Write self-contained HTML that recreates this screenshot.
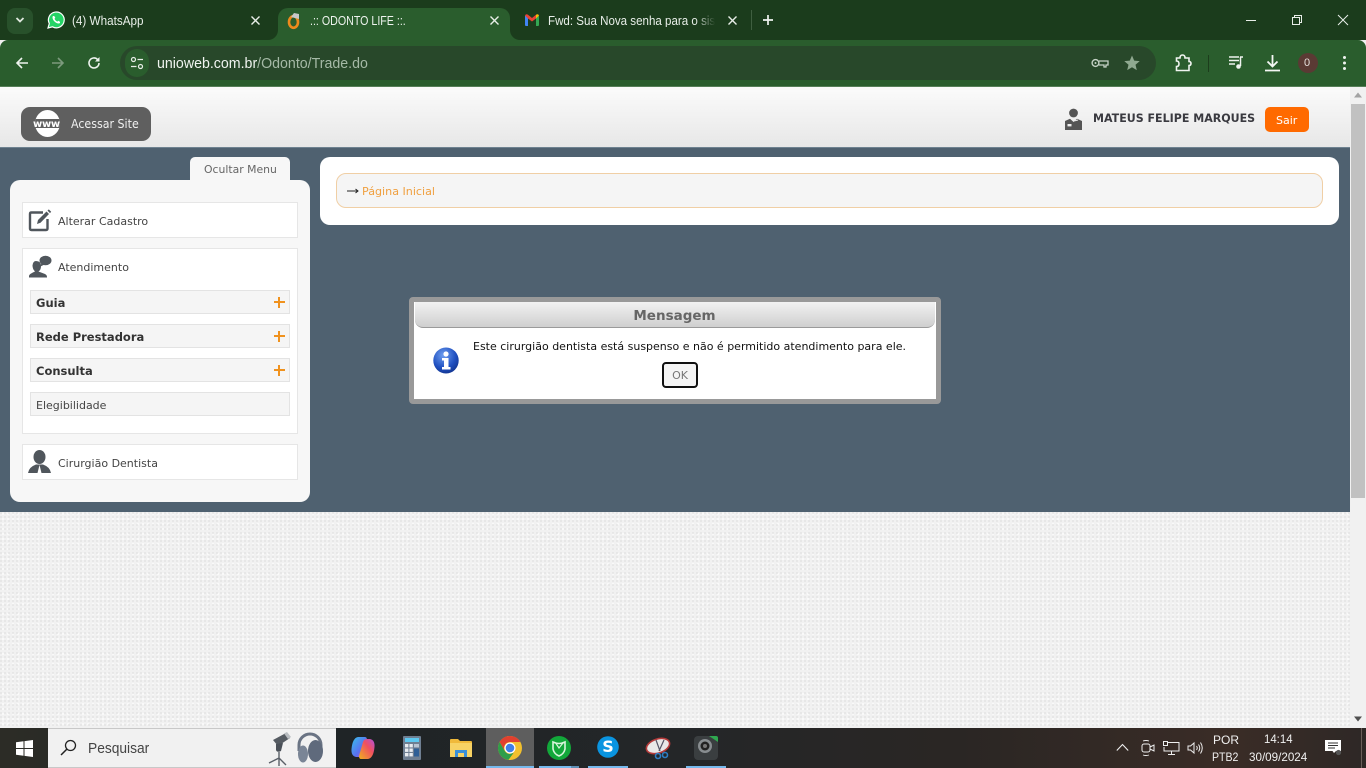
<!DOCTYPE html>
<html lang="pt-BR">
<head>
<meta charset="utf-8">
<title>.:: ODONTO LIFE ::.</title>
<style>
*{box-sizing:border-box}
html,body{margin:0;padding:0;width:1366px;height:768px;overflow:hidden}
body{position:relative;font-family:"DejaVu Sans",Verdana,sans-serif;background:#f0f0f0}
.a{position:absolute}
.t{position:absolute;white-space:nowrap;line-height:1;transform-origin:left center}
.ui{font-family:"Liberation Sans",Arial,sans-serif}
svg{position:absolute;overflow:visible}
.box{position:absolute;background:#fff;border:1px solid #e6e6e6}
.sub{position:absolute;left:30px;width:260px;height:24px;background:#f5f5f5;border:1px solid #e3e3e3}
.sub b,.sub span{position:absolute;left:5px;top:6px;font-size:11.5px;line-height:13px;color:#333;white-space:nowrap}
.sub span{font-size:11px;color:#444}
.plus{position:absolute;left:242.5px;top:10px;width:11px;height:2px;background:#f0921e}
.plus:after{content:"";position:absolute;left:4.5px;top:-4.5px;width:2px;height:11px;background:#f0921e}
.lbl{position:absolute;left:58px;font-size:11px;line-height:13px;color:#444;white-space:nowrap}
</style>
</head>
<body>

<!-- page background pattern -->
<div class="a" style="left:0;top:512px;width:1350px;height:216px;background-color:#f1f1f1;background-image:radial-gradient(circle at 1px 1px,#e4e4e4 0.8px,transparent 1px),radial-gradient(circle at 3px 2px,#fbfbfb 0.9px,transparent 1.1px);background-size:4px 4px,5px 5px"></div>

<!-- Chrome title bar -->
<div class="a" style="left:0;top:0;width:1366px;height:40px;background:#1b3c1c"></div>
<div class="a" style="left:7px;top:8px;width:26px;height:26px;border-radius:8px;background:#28512b"></div>
<svg style="left:15px;top:16px" width="10" height="8" viewBox="0 0 10 8"><path d="M1.5 2 L5 5.5 L8.5 2" fill="none" stroke="#dfe8df" stroke-width="1.8"/></svg>

<!-- WhatsApp tab -->
<svg style="left:47px;top:11px" width="18" height="18" viewBox="0 0 18 18"><path d="M1 17 L2.3 12.5 A7.9 7.9 0 1 1 5.5 15.8 Z" fill="#25d366" stroke="#fff" stroke-width="1.2"/><path d="M6 5 C5 6 5.5 8.5 7.5 10.5 C9.5 12.5 12 13 13 12 L13 10.8 L11.2 9.8 L10.4 10.6 C9 10 8 9 7.5 7.7 L8.3 6.8 L7.2 5 Z" fill="#fff"/></svg>
<div class="t ui" style="left:72px;top:14px;font-size:13px;color:#e8eee8;transform:scaleX(.9)">(4) WhatsApp</div>
<svg style="left:251px;top:16px" width="9" height="9" viewBox="0 0 9 9"><path d="M.5 .5 L8.5 8.5 M8.5 .5 L.5 8.5" stroke="#e8eee8" stroke-width="1.4"/></svg>

<!-- Active tab -->
<div class="a" style="left:278px;top:8px;width:232px;height:34px;background:#2a5d2d;border-radius:10px 10px 0 0"></div>
<svg style="left:268px;top:30px" width="10" height="10" viewBox="0 0 10 10"><path d="M10 0 V10 H0 A10 10 0 0 0 10 0Z" fill="#2a5d2d"/></svg>
<svg style="left:510px;top:30px" width="10" height="10" viewBox="0 0 10 10"><path d="M0 0 V10 H10 A10 10 0 0 1 0 0Z" fill="#2a5d2d"/></svg>
<svg style="left:286px;top:12px" width="16" height="17" viewBox="0 0 16 17"><ellipse cx="7.5" cy="10" rx="4.5" ry="5.8" fill="none" stroke="#ee8a1c" stroke-width="2.6"/><path d="M5 5 L8 1 L13 2 L13 7 Z" fill="#c8c8c8"/></svg>
<div class="t ui" style="left:310px;top:14px;font-size:13px;color:#eef3ee;transform:scaleX(.82)">.:: ODONTO LIFE ::.</div>
<svg style="left:490px;top:16px" width="9" height="9" viewBox="0 0 9 9"><path d="M.5 .5 L8.5 8.5 M8.5 .5 L.5 8.5" stroke="#e8eee8" stroke-width="1.4"/></svg>

<!-- Gmail tab -->
<svg style="left:525px;top:14px" width="14" height="12" viewBox="0 0 14 12"><path d="M0 1.5 L3 3.5 V12 H1 Q0 12 0 11Z" fill="#4285f4"/><path d="M14 1.5 L11 3.5 V12 H13 Q14 12 14 11Z" fill="#34a853"/><path d="M0 1.5 Q1 -.5 3 .8 L7 4 L11 .8 L11 4.5 L7 7.5 L3 4.5Z" fill="#ea4335"/><path d="M11 .8 Q13 -.5 14 1.5 L11 4.5Z" fill="#fbbc04"/></svg>
<div class="t ui" style="left:548px;top:14px;font-size:13px;color:#e8eee8;transform:scaleX(.89);width:188px;overflow:hidden;-webkit-mask-image:linear-gradient(90deg,#000 88%,transparent);mask-image:linear-gradient(90deg,#000 88%,transparent)">Fwd: Sua Nova senha para o sistema</div>
<svg style="left:728px;top:16px" width="9" height="9" viewBox="0 0 9 9"><path d="M.5 .5 L8.5 8.5 M8.5 .5 L.5 8.5" stroke="#e8eee8" stroke-width="1.4"/></svg>
<div class="a" style="left:751px;top:10px;width:1px;height:20px;background:#3f5f40"></div>
<svg style="left:762px;top:14px" width="12" height="12" viewBox="0 0 12 12"><path d="M6 1 V11 M1 6 H11" stroke="#f0f4f0" stroke-width="1.7"/></svg>

<!-- Window controls -->
<svg style="left:1246px;top:15px" width="10" height="10" viewBox="0 0 10 10"><path d="M0 5.5 H10" stroke="#e8eee8" stroke-width="1"/></svg>
<svg style="left:1292px;top:15px" width="10" height="10" viewBox="0 0 10 10"><path d="M.5 2.5 H7.5 V9.5 H.5Z M2.5 2.5 V.5 H9.5 V7.5 H7.5" fill="none" stroke="#e8eee8" stroke-width="1"/></svg>
<svg style="left:1338px;top:15px" width="10" height="10" viewBox="0 0 10 10"><path d="M0 0 L10 10 M10 0 L0 10" stroke="#e8eee8" stroke-width="1"/></svg>

<!-- Toolbar -->
<div class="a" style="left:0;top:40px;width:1366px;height:47px;background:#2a5d2d;border-radius:8px 8px 0 0;border-bottom:1px solid #567f58"></div>
<svg style="left:15px;top:56px" width="14" height="14" viewBox="0 0 14 14"><path d="M13 7 H2 M7 2 L2 7 L7 12" fill="none" stroke="#eef3ee" stroke-width="1.6"/></svg>
<svg style="left:51px;top:56px" width="14" height="14" viewBox="0 0 14 14"><path d="M1 7 H12 M7 2 L12 7 L7 12" fill="none" stroke="#7c9a7d" stroke-width="1.6"/></svg>
<svg style="left:87px;top:56px" width="14" height="14" viewBox="0 0 14 14"><path d="M12 7 A5 5 0 1 1 10.5 3.4" fill="none" stroke="#eef3ee" stroke-width="1.6"/><path d="M12.5 1 V5.5 H8 Z" fill="#eef3ee"/></svg>

<div class="a" style="left:120px;top:46px;width:1036px;height:34px;border-radius:17px;background:#28482a"></div>
<div class="a" style="left:125px;top:49px;width:24px;height:28px;border-radius:14px;background:#2a5d2d"></div>
<svg style="left:130px;top:56px" width="14" height="14" viewBox="0 0 14 14"><circle cx="3.5" cy="3.5" r="2" fill="none" stroke="#e8eee8" stroke-width="1.2"/><path d="M7.5 3.5 H13 M1 10.5 H6.5" stroke="#e8eee8" stroke-width="1.3"/><circle cx="10.5" cy="10.5" r="2" fill="none" stroke="#e8eee8" stroke-width="1.2"/></svg>
<div class="t ui" style="left:157px;top:56px;font-size:15px;color:#f0f4f0;transform:scaleX(.946)">unioweb.com.br<span style="color:#a5b9a6">/Odonto/Trade.do</span></div>
<svg style="left:1091px;top:57px" width="18" height="12" viewBox="0 0 18 12"><circle cx="4.5" cy="6" r="3.4" fill="none" stroke="#c6d2c6" stroke-width="1.4"/><circle cx="4.5" cy="6" r="1" fill="#c6d2c6"/><path d="M8 4 H17 V8 H15 V10 H13 V8 H8" fill="none" stroke="#c6d2c6" stroke-width="1.3"/></svg>
<svg style="left:1124px;top:55px" width="16" height="16" viewBox="0 0 16 16"><path d="M8 .5 L10.2 5.6 L15.7 6.1 L11.5 9.7 L12.8 15.1 L8 12.3 L3.2 15.1 L4.5 9.7 L.3 6.1 L5.8 5.6Z" fill="#8fa990"/></svg>
<svg style="left:1175px;top:54px" width="17" height="18" viewBox="0 0 17 18"><path d="M1.5 4 H5 Q5 1 7.5 1 Q10 1 10 4 H14 V7.5 Q16 7.5 16 9.5 Q16 11.5 14 11.5 V16.5 H1.5 V12.5 Q4 12.5 4 9.7 Q4 7 1.5 7Z" fill="none" stroke="#f0f4f0" stroke-width="1.6"/></svg>
<div class="a" style="left:1208px;top:55px;width:1px;height:17px;background:#1c3d1c"></div>
<svg style="left:1228px;top:55px" width="16" height="15" viewBox="0 0 16 15"><path d="M1 2 H11 M1 5.5 H11 M1 9 H7" stroke="#f0f4f0" stroke-width="1.5"/><path d="M12 2 H15 M12.5 2 V11" stroke="#f0f4f0" stroke-width="1.5"/><circle cx="10.5" cy="11.5" r="2.3" fill="#f0f4f0"/></svg>
<svg style="left:1264px;top:54px" width="17" height="18" viewBox="0 0 17 18"><path d="M8.5 1 V12 M3.5 7.5 L8.5 12.5 L13.5 7.5 M1 16.5 H16" fill="none" stroke="#f4f7f4" stroke-width="1.8"/></svg>
<div class="a" style="left:1298px;top:53px;width:20px;height:20px;border-radius:10px;background:#5a3a34"></div>
<div class="t ui" style="left:1304px;top:58px;font-size:11px;color:#e6e0dd">0</div>
<div class="a" style="left:1343px;top:56px;width:3px;height:3px;border-radius:2px;background:#f0f4f0;box-shadow:0 5.5px 0 #f0f4f0,0 11px 0 #f0f4f0"></div>

<!-- Page header -->
<div class="a" style="left:0;top:87px;width:1350px;height:60px;background:linear-gradient(#fbfbfb,#e7e7e7)"></div>
<div class="a" style="left:21px;top:107px;width:130px;height:34px;border-radius:9px;background:#5f5f5f"></div>
<div class="a" style="left:35px;top:110px;width:25px;height:27px;border-radius:50%;background:#fff;overflow:hidden"><div class="a" style="left:0;top:9px;width:25px;height:9px;background:#5f5f5f"></div></div>
<div class="t" style="left:33px;top:119px;font:bold 10px 'DejaVu Sans',sans-serif;color:#fff;letter-spacing:-.3px">www</div>
<div class="t" style="left:71px;top:118px;font-size:12px;color:#f0f0f0;transform:scaleX(.92)">Acessar Site</div>

<svg style="left:1065px;top:108px" width="18" height="24" viewBox="0 0 18 24"><circle cx="8.5" cy="5" r="4.4" fill="#555"/><path d="M0 22 V13 L5 10.8 L8.5 14 L12 10.8 L17 13 V22Z" fill="#555"/><rect x="2.5" y="16" width="4" height="2.4" fill="#eee"/><path d="M9 13 L13 12" stroke="#eee" stroke-width="1.1"/></svg>
<div class="t" style="left:1093px;top:113px;font-size:11.5px;font-weight:bold;color:#3a3a40;transform:scaleX(.96)">MATEUS FELIPE MARQUES</div>
<div class="a" style="left:1265px;top:107px;width:44px;height:25px;border-radius:5px;background:#ff6a00"></div>
<div class="t" style="left:1276px;top:115px;font-size:11px;color:#fff">Sair</div>

<!-- Blue band -->
<div class="a" style="left:0;top:147px;width:1350px;height:365px;background:#4f6170;border-top:1px solid #6e8290"></div>

<!-- Sidebar -->
<div class="a" style="left:190px;top:157px;width:100px;height:24px;background:#f7f7f7;border-radius:5px 5px 0 0"></div>
<div class="t" style="left:204px;top:163.5px;font-size:11px;color:#666;transform:scaleX(.985)">Ocultar Menu</div>
<div class="a" style="left:10px;top:180px;width:300px;height:322px;background:#f7f7f7;border-radius:10px"></div>

<div class="box" style="left:22px;top:202px;width:276px;height:36px"></div>
<svg style="left:28px;top:209px" width="24" height="23" viewBox="0 0 24 23"><path d="M15 3.5 H3.5 Q2 3.5 2 5 V19.5 Q2 21 3.5 21 H18 Q19.5 21 19.5 19.5 V10" fill="none" stroke="#50565c" stroke-width="2.4"/><path d="M9 15 L10 11 L18.5 2.5 L21 5 L12.5 13.7Z" fill="#50565c"/><path d="M19.5 1.6 L20.8 .4 L23.2 2.8 L22 4.1Z" fill="#50565c"/></svg>
<div class="lbl" style="top:215px">Alterar Cadastro</div>

<div class="box" style="left:22px;top:248px;width:276px;height:186px"></div>
<svg style="left:28px;top:255px" width="24" height="23" viewBox="0 0 24 23"><path d="M8 6 Q13 6 13 11 Q13 15 10.5 16.5 L17 19 Q19 20 19 22 V22.5 H1 V21 Q1 19 7 16.5 Q4.5 14 4.5 10.5 Q5 6 8 6Z" fill="#50565c"/><ellipse cx="17.5" cy="5.5" rx="6" ry="4.8" fill="#50565c"/><path d="M13.5 8.5 L11.5 12 L16.5 9.5Z" fill="#50565c"/></svg>
<div class="lbl" style="top:261px">Atendimento</div>

<div class="sub" style="top:290px"><b>Guia</b><i class="plus"></i></div>
<div class="sub" style="top:324px"><b>Rede Prestadora</b><i class="plus"></i></div>
<div class="sub" style="top:358px"><b>Consulta</b><i class="plus"></i></div>
<div class="sub" style="top:392px"><span>Elegibilidade</span></div>

<div class="box" style="left:22px;top:444px;width:276px;height:36px"></div>
<svg style="left:28px;top:450px" width="24" height="24" viewBox="0 0 24 24"><ellipse cx="11.5" cy="7" rx="6" ry="7" fill="#50565c"/><path d="M0 23 Q1 17 8 14.5 L15 14.5 Q22 17 23 23 L13.5 23 L11.5 15 L9.5 23Z" fill="#50565c"/></svg>
<div class="lbl" style="top:457px">Cirurgião Dentista</div>

<!-- Main panel -->
<div class="a" style="left:320px;top:157px;width:1019px;height:68px;background:#fff;border-radius:10px"></div>
<div class="a" style="left:336px;top:173px;width:987px;height:35px;background:#f5f5f5;border:1px solid #f0cfa5;border-radius:10px"></div>
<svg style="left:347px;top:187px" width="12" height="8" viewBox="0 0 12 8"><path d="M0 4 H10.5 M8.5 2 L11 4 L8.5 6" fill="none" stroke="#222" stroke-width="1"/></svg>
<div class="t" style="left:362px;top:186px;font-size:11px;color:#f0a040;transform:scaleX(1.01)">Página Inicial</div>

<!-- Dialog -->
<div class="a" style="left:409px;top:297px;width:532px;height:107px;background:#fff;border:5px solid #999;border-radius:4px"></div>
<div class="a" style="left:415px;top:302px;width:520px;height:26px;background:linear-gradient(#f2f2f2,#cfcfcf);border-radius:0 0 8px 8px;border-bottom:1px solid #9a9a9a"></div>
<div class="t" style="left:415px;top:308.5px;width:520px;text-align:center;font-size:13.5px;font-weight:bold;color:#666;line-height:14px;padding-right:1px">Mensagem</div>
<svg style="left:433px;top:347px" width="26" height="27" viewBox="0 0 26 27"><defs><radialGradient id="g" cx=".4" cy=".3" r=".8"><stop offset="0" stop-color="#6f9ff0"/><stop offset=".6" stop-color="#1f4fc0"/><stop offset="1" stop-color="#0f2f85"/></radialGradient></defs><ellipse cx="13" cy="13.5" rx="12.7" ry="13" fill="url(#g)"/><circle cx="13" cy="7" r="2.6" fill="#fff"/><path d="M9 11 H15.5 V20 H17.5 V22.5 H9 V20 H11 V13.5 H9Z" fill="#fff"/></svg>
<div class="t" style="left:473px;top:341px;font-size:11px;color:#111">Este cirurgião dentista está suspenso e não é permitido atendimento para ele.</div>
<div class="a" style="left:662px;top:362px;width:36px;height:26px;background:#f5f5f5;border:2px solid #111;border-radius:4px"></div>
<div class="t" style="left:662px;top:370px;width:36px;text-align:center;font-size:11px;color:#777">OK</div>

<!-- Scrollbar -->
<div class="a" style="left:1350px;top:87px;width:16px;height:641px;background:#f1f1f1"></div>
<svg style="left:1354px;top:92px" width="8" height="6" viewBox="0 0 8 6"><path d="M4 .5 L8 5.5 H0Z" fill="#a3a3a3"/></svg>
<div class="a" style="left:1351px;top:104px;width:14px;height:394px;background:#c1c1c1"></div>
<svg style="left:1354px;top:716px" width="8" height="6" viewBox="0 0 8 6"><path d="M4 5.5 L8 .5 H0Z" fill="#505050"/></svg>

<!-- Taskbar -->
<div class="a" style="left:0;top:728px;width:1366px;height:40px;background:linear-gradient(90deg,#2c2c26 0,#1f2426 25%,#242628 50%,#2a2624 70%,#3a2c26 90%,#2e2826 100%)"></div>
<svg style="left:16px;top:740px" width="17" height="17" viewBox="0 0 17 17"><path d="M0 2.3 L7.5 1.3 V8 H0Z M8.5 1.1 L17 0 V8 H8.5Z M0 9 H7.5 V15.7 L0 14.7Z M8.5 9 H17 V17 L8.5 15.9Z" fill="#fff"/></svg>
<div class="a" style="left:48px;top:728px;width:288px;height:40px;background:#f1f1f1;border:1px solid #c8c8c8;border-width:1px 0"></div>
<svg style="left:60px;top:739px" width="17" height="17" viewBox="0 0 17 17"><circle cx="10.5" cy="6.5" r="5" fill="none" stroke="#222" stroke-width="1.3"/><path d="M7 10 L1 16" stroke="#222" stroke-width="1.5"/></svg>
<div class="t ui" style="left:88px;top:742px;font-size:14.5px;color:#444;transform:scaleX(.95)">Pesquisar</div>
<svg style="left:266px;top:730px" width="28" height="37" viewBox="0 0 28 37"><path d="M7 10 L20 3 L24 8 L12 16Z" fill="#555b62"/><path d="M18 3.5 L21 2 L25 7 L22 9Z" fill="#b8bcc0"/><path d="M10 14 V20 Q11 23 15 21 L17 13Z" fill="#4a5058"/><path d="M13 22 V29 M13 28 L3 33 M13 28 L20 35 M13 29 V36" stroke="#5a6068" stroke-width="1.4" fill="none"/></svg>
<svg style="left:295px;top:731px" width="29" height="34" viewBox="0 0 29 34"><path d="M4 20 V14 A11 11 0 0 1 26 14 V22" fill="none" stroke="#6a7484" stroke-width="3"/><ellipse cx="20.5" cy="20" rx="7.5" ry="11" fill="#5f6a7c"/><ellipse cx="8" cy="23" rx="5" ry="8.5" fill="#7a8596"/></svg>

<!-- Taskbar apps -->
<svg style="left:351px;top:736px" width="24" height="24" viewBox="0 0 24 24"><defs><linearGradient id="c1" x1="0" y1="0" x2="1" y2="1"><stop offset="0" stop-color="#38c0e8"/><stop offset=".6" stop-color="#5a70f0"/><stop offset="1" stop-color="#d050c0"/></linearGradient><linearGradient id="c2" x1="0" y1="1" x2="1" y2="0"><stop offset="0" stop-color="#f0b020"/><stop offset=".6" stop-color="#f05060"/><stop offset="1" stop-color="#b050e0"/></linearGradient></defs><path d="M7 1 H14 Q16 1 16 4 L12 19 Q11 21 8 21 H5 Q0 20 0.5 13 Q1.5 2 7 1Z" fill="url(#c1)"/><path d="M17 23 H10 Q8 23 8 20 L12 6 Q13 3 16 3 H19 Q24 4 23.5 11 Q22.5 22 17 23Z" fill="url(#c2)"/></svg>
<svg style="left:403px;top:736px" width="18" height="24" viewBox="0 0 18 24"><rect width="18" height="24" rx="1" fill="#6f7f92"/><rect x="2" y="2" width="14" height="4" fill="#5ec8f0"/><g fill="#e8ecf0"><rect x="2" y="8" width="3.4" height="3.4"/><rect x="6.4" y="8" width="3.4" height="3.4"/><rect x="2" y="12.5" width="3.4" height="3.4"/><rect x="6.4" y="12.5" width="3.4" height="3.4"/><rect x="2" y="17" width="3.4" height="3.4"/><rect x="6.4" y="17" width="3.4" height="3.4"/></g><rect x="11" y="8" width="5" height="3.4" fill="#b8c4d2"/><rect x="11" y="12.5" width="5" height="8" fill="#2f5f96"/></svg>
<svg style="left:450px;top:738px" width="22" height="20" viewBox="0 0 22 20"><path d="M0 2 Q0 1 1 1 H8 L10 3 H21 Q22 3 22 4 V19 H0Z" fill="#f0b93a"/><path d="M0 5 H22 V19 H0Z" fill="#f7d264"/><path d="M5 19 V12 H17 V19 H14 V15 H8 V19Z" fill="#3a8fd8"/></svg>

<div class="a" style="left:486px;top:728px;width:48px;height:40px;background:#5e5e5e"></div>
<svg style="left:498px;top:736px" width="24" height="24" viewBox="0 0 24 24"><circle cx="12" cy="12" r="12" fill="#f2c02e"/><path d="M12 0 A12 12 0 0 0 1.6 6 L6.8 15 A6 6 0 0 1 12 6 H22.4 A12 12 0 0 0 12 0Z" fill="#e0402f"/><path d="M1.6 6 A12 12 0 0 0 10.5 23.9 L15.7 16.7 L12 18 A6 6 0 0 1 6.8 15Z" fill="#2f9e4a"/><circle cx="12" cy="12" r="5.5" fill="#fff"/><circle cx="12" cy="12" r="4.3" fill="#3f7fe8"/></svg>
<div class="a" style="left:486px;top:766px;width:48px;height:2px;background:#76b9ed"></div>

<svg style="left:547px;top:736px" width="24" height="24" viewBox="0 0 24 24"><circle cx="12" cy="12" r="12" fill="#12a83a"/><path d="M6 6 Q12 9 18 6 V13 Q17 18 12 20 Q7 18 6 13Z" fill="none" stroke="#d8f5dc" stroke-width="1.6"/><path d="M9 7.5 L12 12 L16 7" fill="none" stroke="#d8f5dc" stroke-width="1.2"/></svg>
<div class="a" style="left:539px;top:766px;width:32px;height:2px;background:#76b9ed"></div>
<div class="a" style="left:571px;top:766px;width:8px;height:2px;background:#5f8fb5"></div>

<svg style="left:597px;top:736px" width="22" height="22" viewBox="0 0 22 22"><circle cx="11" cy="11" r="10.8" fill="#0a94e0"/></svg>
<div class="t" style="left:597px;top:739px;width:22px;text-align:center;font-size:16px;font-weight:bold;color:#fff">S</div>
<div class="a" style="left:588px;top:766px;width:40px;height:2px;background:#76b9ed"></div>

<svg style="left:645px;top:737px" width="26" height="24" viewBox="0 0 26 24"><ellipse cx="13" cy="9" rx="12" ry="7" transform="rotate(-18 13 9)" fill="#e8e8e8" stroke="#b53a3a" stroke-width="1.6"/><path d="M11 3 L15 14 M19 3 L14 14" stroke="#556" stroke-width="1.2"/><circle cx="13" cy="19" r="2.5" fill="none" stroke="#2d7cc2" stroke-width="1.6"/><circle cx="20" cy="18" r="2.5" fill="none" stroke="#2d7cc2" stroke-width="1.6"/></svg>

<div class="a" style="left:694px;top:736px;width:24px;height:24px;background:#3a3e40;border-radius:4px"></div>
<svg style="left:694px;top:736px" width="24" height="24" viewBox="0 0 24 24"><circle cx="11" cy="10" r="7" fill="#888d90"/><circle cx="11" cy="10" r="4.5" fill="#222"/><circle cx="11" cy="10" r="2" fill="#777"/><path d="M15 0 H22 Q24 0 24 2 V6Z" fill="#2fa84f"/></svg>
<div class="a" style="left:686px;top:766px;width:40px;height:2px;background:#76b9ed"></div>

<!-- Tray -->
<svg style="left:1116px;top:743px" width="13" height="9" viewBox="0 0 13 9"><path d="M.8 7.5 L6.5 1.5 L12.2 7.5" fill="none" stroke="#f0f0f0" stroke-width="1.1"/></svg>
<svg style="left:1141px;top:740px" width="14" height="16" viewBox="0 0 14 16"><rect x="1" y="4" width="8" height="8" rx="2" fill="none" stroke="#eee" stroke-width="1"/><path d="M9 7 L13 5 V11 L9 9" fill="none" stroke="#eee" stroke-width="1"/><path d="M2 1 Q5 0 8 1 M2 15 Q5 16 8 15" fill="none" stroke="#eee" stroke-width=".9"/></svg>
<svg style="left:1163px;top:741px" width="17" height="14" viewBox="0 0 17 14"><path d="M4 1.5 H16 V10 H1 V6" fill="none" stroke="#eee" stroke-width="1"/><rect x=".5" y=".5" width="4" height="4" fill="none" stroke="#eee" stroke-width="1"/><path d="M8.5 10 V13 M5 13.5 H12" stroke="#eee" stroke-width="1"/></svg>
<svg style="left:1187px;top:741px" width="17" height="14" viewBox="0 0 17 14"><path d="M1 5 H3.5 L7 2 V12 L3.5 9 H1Z" fill="none" stroke="#eee" stroke-width="1"/><path d="M9.5 5 Q11 7 9.5 9 M11.5 3.5 Q14 7 11.5 10.5 M13.5 1.5 Q17 7 13.5 12.5" fill="none" stroke="#eee" stroke-width="1"/></svg>
<div class="t ui" style="left:1213px;top:734px;font-size:12px;color:#f0f0f0">POR</div>
<div class="t ui" style="left:1212px;top:751px;font-size:12px;color:#f0f0f0;transform:scaleX(.88)">PTB2</div>
<div class="t ui" style="left:1264px;top:733px;font-size:12px;color:#f0f0f0;transform:scaleX(.95)">14:14</div>
<div class="t ui" style="left:1249px;top:751px;font-size:12px;color:#f0f0f0;transform:scaleX(.97)">30/09/2024</div>
<svg style="left:1325px;top:740px" width="17" height="16" viewBox="0 0 17 16"><path d="M0 0 H16 V11 H11 L9 13 L7.5 11 H0Z" fill="#fff"/><path d="M3 3 H13 M3 5.5 H13 M3 8 H10" stroke="#333" stroke-width="1"/><circle cx="13.5" cy="12.5" r="2.6" fill="#555"/></svg>
<div class="a" style="left:1361px;top:728px;width:1px;height:40px;background:#6a5f5a"></div>

</body>
</html>
